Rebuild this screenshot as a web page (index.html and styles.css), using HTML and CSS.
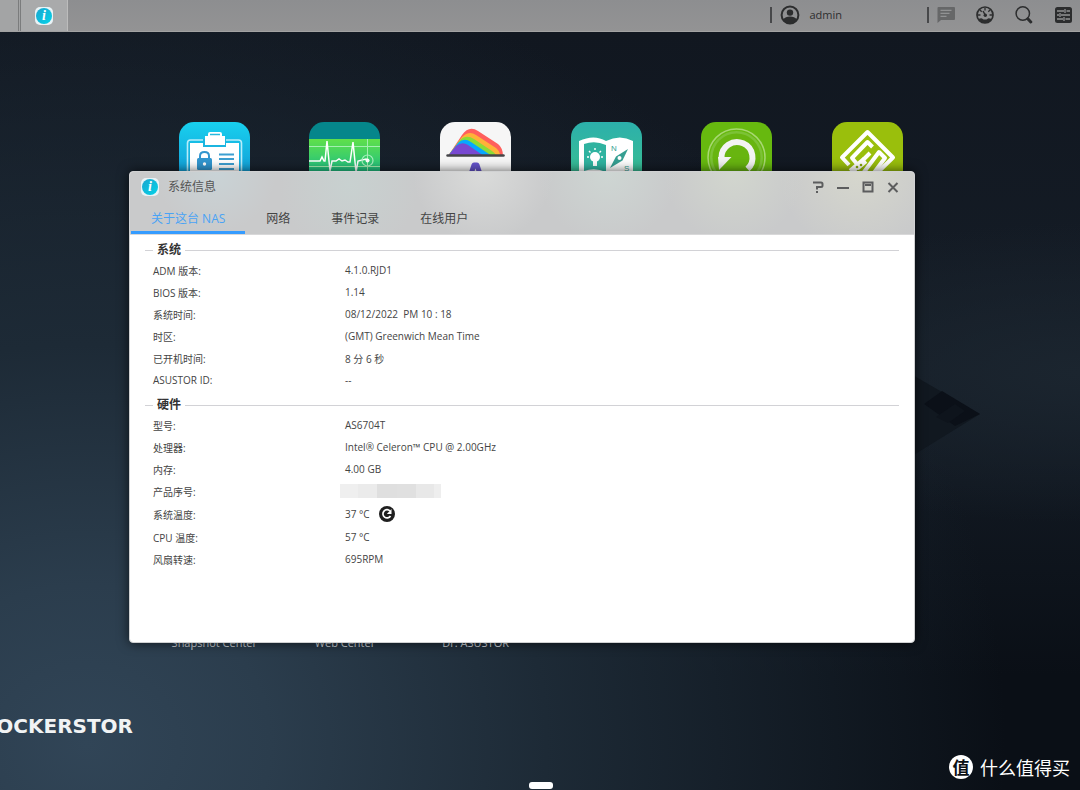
FILE: index.html
```html
<!DOCTYPE html>
<html lang="zh-CN">
<head>
<meta charset="utf-8">
<title>ADM</title>
<link rel="stylesheet" href="styles.css">
</head>
<body>
<header class="taskbar">
  <button class="task-home" aria-label="桌面"></button>
  <button class="task-active" aria-label="系统信息"><span class="info-badge"><span class="info-dot">i</span></span></button>
  <div class="tray">
    <button class="user">
      <svg width="20" height="20" viewBox="0 0 20 20"><circle cx="10" cy="10" r="8.4" fill="none" stroke="#2c2d2e" stroke-width="2"/><circle cx="10" cy="7.6" r="3.2" fill="#2c2d2e"/><path d="M3 14.5q2.500-3 7-3t7 3q-2.500 4-7 4t-7-4z" fill="#2c2d2e"/></svg>
      <span>admin</span>
    </button>
    <div class="tools">
      <button aria-label="消息"><svg width="18" height="18" viewBox="0 0 18 18"><path d="M1.500 1H17q1 0 1 1v11q0 1-1 1H4l-3.500 3V2q0-1 1-1z" fill="#666768"/><path d="M3.500 4.300h11M3.500 7.300h9M3.500 10.300h6" stroke="#919293" stroke-width="1.300"/></svg></button>
      <button aria-label="系统监控"><svg width="18" height="18" viewBox="0 0 18 18"><circle cx="9" cy="9" r="8" fill="none" stroke="#2c2d2e" stroke-width="1.700"/><path d="M9 2v2.500M2 9h2.500M13.500 9H16M4 4l1.700 1.700M14 4l-1.700 1.700" stroke="#2c2d2e" stroke-width="1.300"/><path d="M7 5l2.500 4.500" stroke="#2c2d2e" stroke-width="1.500"/><circle cx="9.300" cy="9.300" r="1.700" fill="#2c2d2e"/><path d="M2.500 13q2.500-1 3.500-.5l1.500 1h3l1.500-1q1-.5 3.500.5-2 4-6.500 4t-6.500-4z" fill="#2c2d2e"/></svg></button>
      <button aria-label="搜索"><svg width="18" height="18" viewBox="0 0 18 18"><circle cx="7.800" cy="7.500" r="6.700" fill="none" stroke="#2c2d2e" stroke-width="1.500"/><path d="M12.800 12.800L15.800 16" stroke="#2c2d2e" stroke-width="3" stroke-linecap="round"/></svg></button>
      <button aria-label="偏好设置"><svg width="18" height="18" viewBox="0 0 18 18"><rect x="1" y="1" width="17" height="16" rx="2.500" fill="#2c2d2e"/><path d="M3 5h7M12.500 5H16M3 9h2M7 9h9M3 13h6M11.500 13H16M11 3v4M6 7v4M10 11v4" stroke="#919293" stroke-width="1.300"/></svg></button>
    </div>
  </div>
</header>

<main class="desktop">
  <svg class="arrow" width="76" height="80" viewBox="0 0 76 80"><path d="M0-6L76 38 0 85z" fill="#111820"/><path d="M20 28L38 15l38 23-25 12z" fill="#0b1018"/><path d="M32 41l19-13 10 7-17 12z" fill="#0e141c"/></svg>

  <div class="launcher">
    <svg class="app" viewBox="0 0 71 71">
      <defs><linearGradient id="blue" x2="0" y2="1"><stop stop-color="#18d0ee"/><stop offset="1" stop-color="#118dd0"/></linearGradient></defs>
      <rect width="71" height="71" rx="15" fill="url(#blue)"/>
      <rect x="8.500" y="18" width="54" height="60" rx="3" fill="none" stroke="#b8edfa" stroke-width="1.600"/>
      <path d="M11 21h49v50H11z" fill="#fff"/><path d="M24 17h23v8H24z" fill="#1bb5e0"/>
      <path d="M26 14h3v-2q0-2 2-2h10q2 0 2 2v2h3v9H26z" fill="#fff"/><path d="M31 12.500h10" stroke="#27b9df" stroke-width="1.500"/>
      <rect x="18" y="36" width="15" height="12" rx="1.500" fill="#3296cf"/><path d="M21 37v-3q0-4 4.500-4t4.500 4v3" fill="none" stroke="#3296cf" stroke-width="2"/><circle cx="25.500" cy="42" r="1.700" fill="#fff"/>
      <path d="M40 32.500h15M40 37h15M40 42h15M40 47h15" stroke="#3d9fd1" stroke-width="2"/>
    </svg>
    <svg class="app" viewBox="0 0 71 71">
      <defs><linearGradient id="pulse" x2="0" y2="1"><stop stop-color="#60e04a"/><stop offset=".6" stop-color="#1fc083"/><stop offset="1" stop-color="#12a58a"/></linearGradient></defs>
      <rect width="71" height="71" rx="15" fill="#05868b"/><path d="M0 17h71v54H0z" fill="url(#pulse)"/>
      <path d="M0 24.500h71M0 44.500h71M58.500 17v54" stroke="#a4efb0" stroke-width="1"/>
      <path d="M0 39h11l2-4 2 4h1l2-20 3 30 2-10h4l3-2 3 2 3-1 3 2h2l3-20 3 30 2-11 8-2 3 2" fill="none" stroke="#fff" stroke-width="1.500"/>
      <circle cx="58.500" cy="38.500" r="5.500" fill="none" stroke="#a9f0c0" stroke-width="1.200"/><circle cx="58.500" cy="38.500" r="2" fill="#fff"/>
    </svg>
    <svg class="app" viewBox="0 0 71 71">
      <rect width="71" height="71" rx="15" fill="#f6f6f6"/>
      <path d="M8 34L22 13q7-10 16-4l20 13q5 4 5 12z" fill="#ff5f5c"/>
      <path d="M8 34L22 15q7-7 14-2l20 13q4 3 4 8z" fill="#ffb238"/>
      <path d="M8 34L20 18q6-6 14-1l18 12q4 3 4 5z" fill="#8cdc36"/>
      <path d="M8 34L18 21q6-6 13-1l21 14z" fill="#06a8ff"/>
      <path d="M8 34l8-10q6-5 12-1l16 11z" fill="#7848d1"/>
      <path d="M7.500 33.500h56" stroke="#454548" stroke-width="2.500" stroke-linecap="round"/><path d="M27 64l7-21h3l7 21" fill="none" stroke="#6553cc" stroke-width="5" stroke-linejoin="round"/>
    </svg>
    <svg class="app" viewBox="0 0 71 71">
      <defs><linearGradient id="teal" x2="0" y2="1"><stop stop-color="#2cb0ab"/><stop offset="1" stop-color="#3dc28a"/></linearGradient></defs>
      <rect width="71" height="71" rx="15" fill="url(#teal)"/><path d="M8 19q15-7 27 0 14-7 27 0v40H8z" fill="#fff"/>
      <path d="M13 22q11-4 22 1v27q-11-5-22-1z" fill="#2fb3a0"/>
      <circle cx="24" cy="35" r="5" fill="#fff"/><path d="M22 38h4v6h-4z" fill="#fff"/><path d="M24 26v2M16 35h2M30 35h2M18 29l1.500 1.500M30 29l-1.500 1.500" stroke="#fff" stroke-width="1.400"/>
      <text x="40" y="29" class="compass-text">N</text><text x="53" y="49" class="compass-text">S</text>
      <path d="M57 27L51.500 38.500 39 46l6-11.500z" fill="#369f92"/><circle cx="48.500" cy="36" r="2" fill="#fff"/>
    </svg>
    <svg class="app" viewBox="0 0 71 71">
      <rect width="71" height="71" rx="15" fill="#67b90f"/><circle cx="35.500" cy="35.500" r="26.500" fill="#7cc236"/><circle cx="35.500" cy="35.500" r="28.500" fill="none" stroke="#a8d872" stroke-width="1.500"/><circle cx="35.500" cy="35.500" r="24" fill="#68b510"/>
      <path d="M20.500 36a15.500 15.500 0 1 1 26 11" fill="none" stroke="#f3f3f3" stroke-width="6"/><path d="M17 35h13.500L18 48z" fill="#f3f3f3"/>
    </svg>
    <svg class="app" viewBox="0 0 71 71">
      <rect width="71" height="71" rx="15" fill="#9abf0c"/>
      <g fill="none" stroke="#fff" stroke-width="4" stroke-linejoin="round"><path d="M17 43l-7-7.500L35.500 10 61 35.500 40 56"/><path d="M25 42l-5-6 15.500-16 5 5"/><path d="M26 58l21-28 6 6-18 24M31 38l7-7"/></g>
      <path d="M19 50l14-12" stroke="#fff" stroke-width="7"/><circle cx="25" cy="45" r="1.300" fill="#87a60d"/><circle cx="29" cy="43" r="1.300" fill="#87a60d"/><circle cx="26" cy="49" r="1.300" fill="#87a60d"/>
    </svg>
  </div>
  <div class="labels"><span>Snapshot Center</span><span>Web Center</span><span>Dr. ASUSTOR</span></div>
  <div class="brand">OCKERSTOR</div>
  <div class="pager"></div>
  <div class="watermark"><span class="mark">值</span><span>什么值得买</span></div>

  <section class="window">
    <div class="window-head">
      <div class="titlebar">
        <span class="info-badge"><span class="info-dot">i</span></span>
        <h1>系统信息</h1>
        <div class="controls">
          <button aria-label="帮助"><svg width="12" height="12" viewBox="0 0 12 12"><path d="M1 1.500h8q1.500 0 1.500 1.500v1.500Q10.500 6 9 6H5v2.500M5 10v2"/></svg></button>
          <button aria-label="最小化"><svg width="12" height="12" viewBox="0 0 12 12"><path d="M0 7h12"/></svg></button>
          <button aria-label="最大化"><svg width="12" height="12" viewBox="0 0 12 12"><path d="M1.500 1.500h9v9h-9zM3 4h6"/></svg></button>
          <button aria-label="关闭"><svg width="12" height="12" viewBox="0 0 12 12"><path d="M1.500 2l9 9M10.500 2l-9 9"/></svg></button>
        </div>
      </div>
      <nav class="tabs">
        <button class="tab selected">关于这台 NAS</button>
        <button class="tab">网络</button>
        <button class="tab">事件记录</button>
        <button class="tab">在线用户</button>
      </nav>
    </div>
    <div class="window-body">
      <fieldset>
        <legend>系统</legend>
        <table>
          <tr><th scope="row">ADM 版本:</th><td>4.1.0.RJD1</td></tr>
          <tr><th scope="row">BIOS 版本:</th><td>1.14</td></tr>
          <tr><th scope="row">系统时间:</th><td>08/12/2022&nbsp; PM 10 : 18</td></tr>
          <tr><th scope="row">时区:</th><td>(GMT) Greenwich Mean Time</td></tr>
          <tr><th scope="row">已开机时间:</th><td>8 分 6 秒</td></tr>
          <tr><th scope="row">ASUSTOR ID:</th><td>--</td></tr>
        </table>
      </fieldset>
      <fieldset>
        <legend>硬件</legend>
        <table>
          <tr><th scope="row">型号:</th><td>AS6704T</td></tr>
          <tr><th scope="row">处理器:</th><td>Intel® Celeron™ CPU @ 2.00GHz</td></tr>
          <tr><th scope="row">内存:</th><td>4.00 GB</td></tr>
          <tr><th scope="row">产品序号:</th><td><div class="masked"></div></td></tr>
          <tr class="tall"><th scope="row">系统温度:</th><td><div class="reading">37 °C<button aria-label="刷新"><svg width="16" height="16" viewBox="0 0 16 16"><circle cx="8" cy="8" r="8" fill="#1f1f1f"/><path d="M11.500 10a4.100 4.100 0 1 1-.5-5" fill="none" stroke="#fff" stroke-width="1.700"/><path d="M12.500 3v5H7.800z" fill="#fff"/></svg></button></div></td></tr>
          <tr><th scope="row">CPU 温度:</th><td>57 °C</td></tr>
          <tr><th scope="row">风扇转速:</th><td>695RPM</td></tr>
        </table>
      </fieldset>
    </div>
  </section>
</main>
</body>
</html>
```
FILE: styles.css
```css
* { box-sizing: border-box; }

body {
  margin: 0;
  min-height: 100vh;
  display: flex;
  flex-direction: column;
  font-family: "Open Sans", "Noto Sans CJK SC", sans-serif;
  font-size: 10px;
  color: #444;
}

button {
  border: 0;
  padding: 0;
  background: none;
  font: inherit;
  color: inherit;
  display: flex;
  align-items: center;
}

svg { display: block; }

.taskbar {
  height: 32px;
  display: flex;
  background: linear-gradient(#8d8e90, #939394);
  border-bottom: 1px solid #a2a2a2;
}

.task-home {
  width: 21px;
  background: #a3a4a5;
  border-right: 3px double #7b7c7d;
}

.task-active {
  width: 47px;
  justify-content: center;
  background: #a9aaab;
  border-right: 1px solid #bcbcbc;
}

.info-badge {
  width: 18px;
  height: 18px;
  padding: 1px;
  border-radius: 5px;
  background: #e9f3f6;
}

.info-dot {
  display: block;
  height: 16px;
  border-radius: 50%;
  background: linear-gradient(135deg, #1ba5cf, #04d3e8);
  color: #fff;
  font: italic bold 14px/15px "Liberation Serif", serif;
  text-align: center;
}

.tray {
  margin-left: auto;
  display: flex;
  align-items: center;
  padding: 0 8px 2px 0;
  gap: 85px;
}

.user, .tools {
  position: relative;
  display: flex;
  align-items: center;
  padding-left: 10px;
}

.user::before, .tools::before {
  content: "";
  position: absolute;
  left: 0;
  top: 0;
  bottom: 0;
  width: 2px;
  height: 16px;
  margin: auto 0;
  background: #47484a;
}

.user { gap: 9px; font-size: 11px; color: #2e2e2f; }
.tools { gap: 21px; }

.desktop {
  position: relative;
  flex: 1;
  overflow: hidden;
  padding: 90px 147px 0 149px;
  background:
    radial-gradient(ellipse 420px 150px at 100% 45%, #1b252f, transparent),
    radial-gradient(ellipse 920px 800px at 8% 94%, #314557 0%, #2b3d4d 20%, #1d2a36 50%, transparent 100%),
    linear-gradient(#111720, #151d27 45%, #0a0f16 85%);
}

.arrow { position: absolute; top: 344px; right: 100px; }

.launcher, .labels {
  display: grid;
  grid-template-columns: repeat(6, 1fr);
  justify-items: center;
}

.app { width: 71px; height: 71px; }

.compass-text { font: 8px "Liberation Sans", sans-serif; fill: #369f92; }

.labels {
  margin-top: 442px;
  font-size: 11px;
  line-height: 16px;
  color: #ccd2d7;
}

.brand {
  position: absolute;
  left: 0;
  bottom: 53px;
  width: 133px;
  display: flex;
  justify-content: flex-end;
  font: bold 20px/22px "DejaVu Sans", sans-serif;
  color: #f1f3f4;
}

.pager {
  position: absolute;
  left: 50%;
  bottom: 1px;
  width: 24px;
  height: 7px;
  margin-left: -11px;
  border-radius: 3px;
  background: #fff;
}

.watermark {
  position: absolute;
  right: 10px;
  bottom: 11px;
  display: flex;
  align-items: center;
  gap: 7px;
  font: 18px/24px "Noto Sans CJK SC", sans-serif;
  color: #fff;
}

.mark {
  width: 24px;
  height: 24px;
  border-radius: 50%;
  background: #fff;
  color: #0b1016;
  font-size: 17px;
  line-height: 23px;
  font-weight: bold;
  text-align: center;
}

.window {
  position: absolute;
  top: 139px;
  left: 129px;
  right: 165px;
  border: 1px solid #d0d1d2;
  border-radius: 4px;
  overflow: hidden;
  background: #fff;
  box-shadow: 0 0 12px #000a;
}

.window-head {
  background:
    radial-gradient(circle 60px at 11% 0, #c9d3d6, transparent),
    radial-gradient(circle 70px at 28% 20%, #c8d1d0, transparent),
    radial-gradient(circle 70px at 45% 0, #dadbda, transparent),
    radial-gradient(circle 70px at 61% 0, #ced6d3, transparent),
    radial-gradient(circle 70px at 77% 0, #d2d6ce, transparent),
    radial-gradient(circle 80px at 93% 0, #d6d7cd, transparent),
    #c9cacb;
  border-bottom: 1px solid #d8d8d9;
}

.titlebar {
  display: flex;
  align-items: center;
  gap: 9px;
  height: 30px;
  padding: 0 15px 0 11px;
}

.titlebar h1 { margin: 0; font-size: 12px; line-height: 16px; font-weight: 400; color: #555; }

.controls { margin-left: auto; display: flex; gap: 13px; }
.controls svg { fill: none; stroke: #5c5d5e; stroke-width: 2; }

.tabs { display: flex; gap: 1px; padding: 0 1px; }

.tab {
  height: 32px;
  padding: 3px 20px 0;
  border-bottom: 3px solid transparent;
  font-size: 12px;
}

.selected { border-color: #359cff; color: #4aa3f5; }

.window-body { padding: 7px 15px 66px; }

fieldset {
  margin: 0 0 6px;
  padding: 1px 0 0;
  border: 0;
  border-top: 1px solid #d2d2d6;
}

legend {
  margin-left: 8px;
  padding: 0 4px;
  font-size: 12px;
  line-height: 16px;
  font-weight: 700;
  color: #333;
}

table { width: 100%; border-collapse: collapse; table-layout: fixed; }
tr { height: 22px; }
.tall { height: 24px; }
th { width: 200px; padding: 0 0 0 8px; text-align: left; font-weight: 400; }
td { padding: 0; }

.masked {
  width: 101px;
  height: 14px;
  margin-left: -5px;
  background: linear-gradient(90deg, #efefef 18%, #ebebeb 18% 37%, #dfdfdf 37% 56%, #e0e0e0 56% 75%, #e8e8e8 75% 93%, #eee 93%);
}

.reading { display: flex; align-items: center; gap: 9px; }
```
